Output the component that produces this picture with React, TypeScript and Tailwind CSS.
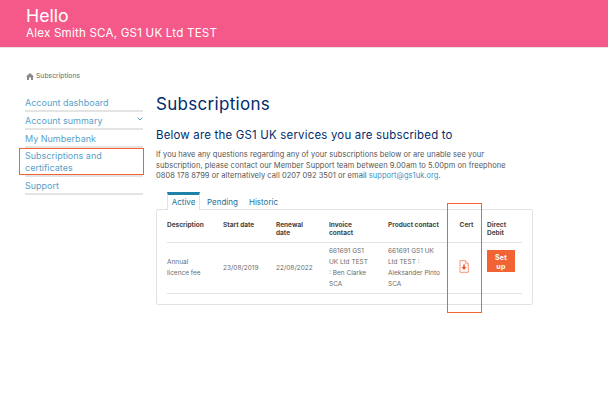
import React from "react";

const font = { fontFamily: '"Inter", "Liberation Sans", sans-serif' };
const cols = "grid grid-cols-[56px_53px_53px_59px_58px_41px_1fr]";

function NavItem({ label, chevron, boxed, tall }: { label: React.ReactNode; chevron?: boolean; boxed?: boolean; tall?: boolean }) {
  return (
    <div className={`relative border-b-2 border-[#e4e4e4] flex justify-between items-start ${tall ? "h-[28.5px] pt-[2px]" : "h-[18px] pt-[3px]"}`}>
      <span className="text-[9px] leading-[12px] text-[#5a9fc8]">{label}</span>
      {chevron && (
        <svg width="6" height="4" viewBox="0 0 6 4" className="mt-[2px]">
          <path d="M0.5 0.5 L3 3 L5.5 0.5" fill="none" stroke="#4a9ac4" strokeWidth="1" />
        </svg>
      )}
      {boxed && <div className="absolute left-[-6px] right-[-1px] top-0 bottom-0 border border-[#f26334]" />}
    </div>
  );
}

export default function App() {
  return (
    <div className="w-[608px] h-[405px] bg-white overflow-hidden flex flex-col" style={font}>
      <header className="h-[48px] bg-[#f4598a] border-b border-[#e9e3e6] pl-[26px] pt-[6px] text-white">
        <div className="text-[17.7px] leading-[20px]">Hello</div>
        <div className="text-[11.6px] leading-[14px] tracking-[0.2px]">Alex Smith SCA, GS1 UK Ltd TEST</div>
      </header>

      <div className="pl-[26px] pt-[24px] flex items-center gap-[2px] text-[6.8px] leading-[8px] text-[#666]">
        <svg width="8" height="7" viewBox="0 0 8 7">
          <path d="M0 3.5 L4 0 L8 3.5 L7 3.5 L7 7 L5 7 L5 4.5 L3 4.5 L3 7 L1 7 L1 3.5 Z" fill="#8a8a8a" />
        </svg>
        <span>Subscriptions</span>
      </div>

      <div className="flex pl-[25px] pt-[14px]">
        <aside className="w-[118px] shrink-0 flex flex-col">
          <NavItem label="Account dashboard" />
          <NavItem label="Account summary" chevron />
          <NavItem label="My Numberbank" />
          <NavItem label={<>Subscriptions and<br />certificates</>} boxed tall />
          <NavItem label="Support" />
        </aside>

        <main className="ml-[13px] w-[378px]">
          <h1 className="text-[17px] leading-[20px] text-[#002c6c] tracking-[0.3px]">Subscriptions</h1>
          <h2 className="text-[11.45px] leading-[14px] mt-[14px] text-[#002c6c] tracking-[0.2px]">Below are the GS1 UK services you are subscribed to</h2>
          <p className="text-[7.5px] leading-[10.5px] mt-[8px] text-[#555] tracking-[0.05px]">
            If you have any questions regarding any of your subscriptions below or are unable see your<br />
            subscription, please contact our Member Support team between 9.00am to 5.00pm on freephone<br />
            0808 178 8799 or alternatively call 0207 092 3501 or email <span className="text-[#3a94c4]">support@gs1uk.org</span>.
          </p>

          <div className="mt-[10.5px] -mb-px flex items-end text-[8px] leading-[10px] h-[18px] relative z-10 pl-[11px]">
            <div className="w-[33px] h-[18px] border-t-[3px] border-t-[#1d81a8] border-x border-x-[#e4e4e4] bg-white text-center pt-[2px] text-[#1d6f96]">Active</div>
            <div className="ml-[7px] pb-[3px] text-[#1d6f96]">Pending</div>
            <div className="ml-[11px] pb-[3px] text-[#1d6f96]">Historic</div>
          </div>

          <div className="w-[377px] h-[96px] border border-[#e2e2e2] rounded-[2px] px-[10px] text-[6.5px] relative">
            <div className="w-[355px]">
              <div className={`${cols} h-[33px] border-b border-[#e2e2e2] pt-[12px] font-bold text-[#444] leading-[7.5px]`}>
                <div>Description</div>
                <div>Start date</div>
                <div>Renewal<br />date</div>
                <div>Invoice<br />contact</div>
                <div>Product contact</div>
                <div className="text-center">Cert</div>
                <div>Direct<br />Debit</div>
              </div>
              <div className={`${cols} h-[51px] border-b border-[#e2e2e2] items-center text-[#6b6b6b] leading-[11px]`}>
                <div>Annual<br />licence fee</div>
                <div>23/08/2019</div>
                <div>22/08/2022</div>
                <div>661691 GS1<br />UK Ltd TEST<br />: Ben Clarke<br />SCA</div>
                <div>661691 GS1 UK<br />Ltd TEST :<br />Aleksander Pinto<br />SCA</div>
                <div className="flex justify-center pr-[5px] pb-[4px]">
                  <svg width="10" height="13" viewBox="0 0 10 13">
                    <path d="M1 .7 H6.5 L9.3 3.5 V12.3 H1 Z" fill="#fff" stroke="#f58a68" strokeWidth=".9" />
                    <path d="M6.3 .8 V3.7 H9.2" fill="none" stroke="#f58a68" strokeWidth=".7" />
                    <path d="M4.2 4.5 H5.8 V7 H7.5 L5 10 L2.5 7 H4.2 Z" fill="#ee4f28" />
                  </svg>
                </div>
                <div className="self-start mt-[7px]">
                  <div className="w-[28px] h-[22px] bg-[#f26334] text-white font-bold text-[7px] tracking-[0.3px] text-center leading-[9px] pt-[3px]">Set<br />up</div>
                </div>
              </div>
            </div>
            <div className="absolute left-[290px] top-[-7px] w-[35px] h-[110px] border border-[#f26334]" />
          </div>
        </main>
      </div>
    </div>
  );
}
